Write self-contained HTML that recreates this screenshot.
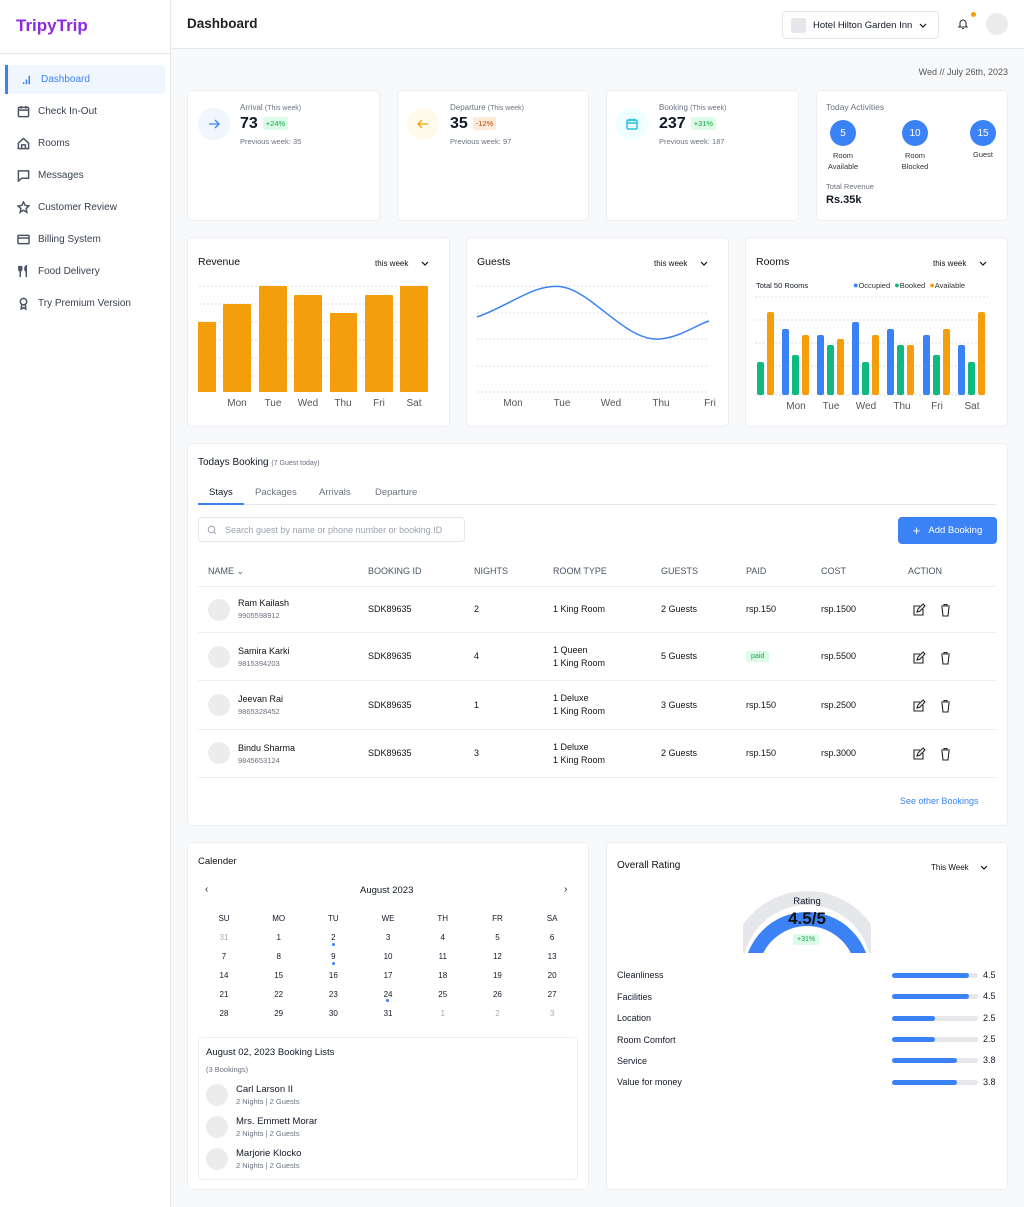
<!DOCTYPE html>
<html><head><meta charset="utf-8">
<style>
*{box-sizing:border-box;margin:0;padding:0}
body{width:1024px;height:1207px;font-family:"Liberation Sans",sans-serif;background:#f8f9fb;color:#111827;position:relative;overflow:hidden;font-size:9px}
.abs{position:absolute}
.side{left:0;top:0;width:171px;height:1207px;background:#fff;border-right:1px solid #e5e7eb}
.logo{left:16px;top:16px;font-size:17px;font-weight:bold;color:#8b2be2}
.nav{left:5px;width:160px;height:29px;display:flex;align-items:center;padding-left:12px;font-size:10px;color:#374151}
.nav svg{width:13px;height:13px;margin-right:8px;fill:none;stroke:#4b5563;stroke-width:1.6}
.card{background:#fff;border:1px solid #eceef2;border-radius:5px}
.muted{color:#6b7280}
.t{font-size:10.5px;color:#111}
.dd{font-size:8px;color:#111}
.badge{display:inline-block;font-size:7.5px;padding:2px 3px;border-radius:2px;vertical-align:middle;margin-left:5px}
.ic{width:32px;height:32px;border-radius:50%;display:flex;align-items:center;justify-content:center}
.circ{width:26px;height:26px;border-radius:50%;background:#3b82f6;color:#fff;font-size:10px;display:flex;align-items:center;justify-content:center}
.th{font-size:9px;color:#4b5563;top:566px}
.row{font-size:9px;color:#111}
.av{width:22px;height:22px;border-radius:50%;background:#ececec}
.cal div{font-size:8px;text-align:center;width:30px}
.bar{height:5px;background:#e5e7eb;border-radius:3px;width:86px;left:892px}
.bar i{display:block;height:5px;background:#3b82f6;border-radius:3px}
.rv{left:983px;font-size:9px}
</style></head><body>
<div class="abs side"></div>
<div class="abs logo">TripyTrip</div>
<div class="abs" style="left:0;top:53px;width:171px;border-top:1px solid #e5e7eb"></div>
<div class="abs nav" style="top:65px;background:#eff6ff;border-left:3px solid #3b82f6;border-radius:0 4px 4px 0;color:#3b82f6"><svg viewBox="0 0 14 14" style="stroke:#3b82f6"><path d="M4 12V10M7 12V7M10 12V3"/></svg>Dashboard</div>
<div class="abs nav" style="top:97px"><svg viewBox="0 0 14 14"><rect x="1.5" y="2.5" width="11" height="10" rx="1"/><path d="M1.5 5.5h11M4.5 1v3M9.5 1v3"/></svg>Check In-Out</div>
<div class="abs nav" style="top:129px"><svg viewBox="0 0 14 14"><path d="M1.5 6.5L7 1.5l5.5 5v6h-11z"/><path d="M5 12.5v-4h4v4"/></svg>Rooms</div>
<div class="abs nav" style="top:161px"><svg viewBox="0 0 14 14"><path d="M1.5 2h11v8H5l-3.5 3z"/></svg>Messages</div>
<div class="abs nav" style="top:193px"><svg viewBox="0 0 14 14"><path d="M7 1l1.8 3.8 4 .5-3 2.8.8 4L7 10l-3.6 2.1.8-4-3-2.8 4-.5z"/></svg>Customer Review</div>
<div class="abs nav" style="top:225px"><svg viewBox="0 0 14 14"><rect x="1" y="2.5" width="12" height="9" rx="1"/><path d="M1 5.5h12"/></svg>Billing System</div>
<div class="abs nav" style="top:257px"><svg viewBox="0 0 14 14"><path d="M2 1v4a1.5 1.5 0 003 0V1M3.5 1v12M10 13V1c-2 1-2 5 0 6"/></svg>Food Delivery</div>
<div class="abs nav" style="top:289px"><svg viewBox="0 0 14 14"><circle cx="7" cy="5" r="3.5"/><path d="M5 8.5L4.5 13 7 11.5 9.5 13 9 8.5"/></svg>Try Premium Version</div>

<div class="abs" style="left:172px;top:0;width:852px;height:49px;background:#fff;border-bottom:1px solid #e5e7eb"></div>
<div class="abs" style="left:187px;top:16px;font-size:13.5px;font-weight:bold;color:#222">Dashboard</div>
<div class="abs" style="left:782px;top:11px;width:157px;height:28px;border:1px solid #e5e7eb;border-radius:4px;background:#fff;display:flex;align-items:center;padding-left:8px;font-size:9.5px"><span style="width:15px;height:15px;background:#e5e7eb;border-radius:2px;margin-right:7px"></span>Hotel Hilton Garden Inn<svg width="10" height="10" viewBox="0 0 10 10" style="margin-left:6px"><path d="M2 4l3 3 3-3" stroke="#111" fill="none" stroke-width="1.2"/></svg></div>
<svg class="abs" style="left:957px;top:17px" width="12" height="13" viewBox="0 0 12 13"><path d="M3 9V6a3 3 0 016 0v3l1 1H2zM5 11.5h2" stroke="#333" fill="none" stroke-width="1.1"/></svg>
<div class="abs" style="left:971px;top:12px;width:5px;height:5px;border-radius:50%;background:#f59e0b"></div>
<div class="abs" style="left:986px;top:13px;width:22px;height:22px;border-radius:50%;background:#ececec"></div>
<div class="abs muted" style="left:880px;top:67px;width:128px;text-align:right;font-size:9px;color:#555">Wed // July 26th, 2023</div>

<!-- stat cards -->
<div class="abs card" style="left:187px;top:90px;width:193px;height:131px"></div>
<div class="abs ic" style="left:198px;top:108px;background:#eff6ff"><svg width="14" height="14" viewBox="0 0 14 14"><path d="M2 7h10M8 3l4 4-4 4" stroke="#3b82f6" fill="none" stroke-width="1.3"/></svg></div>
<div class="abs muted" style="left:240px;top:103px;font-size:8px">Arrival <span style="font-size:7px">(This week)</span></div>
<div class="abs" style="left:240px;top:115px;font-size:16px;font-weight:bold">73<span class="badge" style="background:#dcfce7;color:#16a34a;font-weight:normal">+24%</span></div>
<div class="abs muted" style="left:240px;top:137px;font-size:7.5px">Previous week: 35</div>

<div class="abs card" style="left:397px;top:90px;width:192px;height:131px"></div>
<div class="abs ic" style="left:407px;top:108px;background:#fffbeb"><svg width="14" height="14" viewBox="0 0 14 14"><path d="M12 7H2M6 3L2 7l4 4" stroke="#f59e0b" fill="none" stroke-width="1.3"/></svg></div>
<div class="abs muted" style="left:450px;top:103px;font-size:8px">Departure <span style="font-size:7px">(This week)</span></div>
<div class="abs" style="left:450px;top:115px;font-size:16px;font-weight:bold">35<span class="badge" style="background:#fdebd8;color:#c2410c;font-weight:normal">-12%</span></div>
<div class="abs muted" style="left:450px;top:137px;font-size:7.5px">Previous week: 97</div>

<div class="abs card" style="left:606px;top:90px;width:193px;height:131px"></div>
<div class="abs ic" style="left:616px;top:108px;background:#ecfeff"><svg width="14" height="14" viewBox="0 0 14 14"><rect x="2" y="3" width="10" height="9" rx="1" stroke="#06b6d4" fill="none" stroke-width="1.2"/><path d="M2 6h10M5 1.5v3M9 1.5v3" stroke="#06b6d4" stroke-width="1.2"/></svg></div>
<div class="abs muted" style="left:659px;top:103px;font-size:8px">Booking <span style="font-size:7px">(This week)</span></div>
<div class="abs" style="left:659px;top:115px;font-size:16px;font-weight:bold">237<span class="badge" style="background:#dcfce7;color:#16a34a;font-weight:normal">+31%</span></div>
<div class="abs muted" style="left:659px;top:137px;font-size:7.5px">Previous week: 187</div>

<div class="abs card" style="left:816px;top:90px;width:192px;height:131px"></div>
<div class="abs muted" style="left:826px;top:102px;font-size:8.5px">Today Activities</div>
<div class="abs circ" style="left:830px;top:120px">5</div>
<div class="abs circ" style="left:902px;top:120px">10</div>
<div class="abs circ" style="left:970px;top:120px">15</div>
<div class="abs" style="left:815px;top:150px;width:56px;text-align:center;font-size:7.5px;color:#333;line-height:11px">Room<br>Available</div>
<div class="abs" style="left:887px;top:150px;width:56px;text-align:center;font-size:7.5px;color:#333;line-height:11px">Room<br>Blocked</div>
<div class="abs" style="left:955px;top:150px;width:56px;text-align:center;font-size:7.5px;color:#333">Guest</div>
<div class="abs muted" style="left:826px;top:182px;font-size:7.5px">Total Revenue</div>
<div class="abs" style="left:826px;top:194px;font-size:11px;font-weight:bold">Rs.35k</div>

<!-- charts -->
<div class="abs card" style="left:187px;top:237px;width:263px;height:190px"></div>
<div class="abs t" style="left:198px;top:256px">Revenue</div>
<div class="abs dd" style="left:375px;top:259px">this week</div>
<svg class="abs" style="left:420px;top:258px" width="10" height="10" viewBox="0 0 10 10"><path d="M2 4l3 3 3-3" stroke="#111" fill="none" stroke-width="1.2"/></svg>
<svg class="abs" style="left:187px;top:237px" width="263" height="190">
<g stroke="#ddd" stroke-dasharray="2 2"><line x1="12" y1="49" x2="242" y2="49"/><line x1="12" y1="67" x2="242" y2="67"/><line x1="12" y1="85" x2="242" y2="85"/><line x1="12" y1="103" x2="242" y2="103"/><line x1="12" y1="121" x2="242" y2="121"/><line x1="12" y1="139" x2="242" y2="139"/></g>
<g fill="#f59e0b"><rect x="11" y="85" width="18" height="70"/><rect x="36" y="67" width="28" height="88" rx="1"/><rect x="72" y="49" width="28" height="106" rx="1"/><rect x="107" y="58" width="28" height="97" rx="1"/><rect x="143" y="76" width="27" height="79" rx="1"/><rect x="178" y="58" width="28" height="97" rx="1"/><rect x="213" y="49" width="28" height="106" rx="1"/></g>
<g font-size="10" fill="#555" text-anchor="middle" font-family="Liberation Sans"><text x="50" y="169">Mon</text><text x="86" y="169">Tue</text><text x="121" y="169">Wed</text><text x="156" y="169">Thu</text><text x="192" y="169">Fri</text><text x="227" y="169">Sat</text></g>
</svg>

<div class="abs card" style="left:466px;top:237px;width:263px;height:190px"></div>
<div class="abs t" style="left:477px;top:256px">Guests</div>
<div class="abs dd" style="left:654px;top:259px">this week</div>
<svg class="abs" style="left:699px;top:258px" width="10" height="10" viewBox="0 0 10 10"><path d="M2 4l3 3 3-3" stroke="#111" fill="none" stroke-width="1.2"/></svg>
<svg class="abs" style="left:466px;top:237px" width="263" height="190">
<g stroke="#ddd" stroke-dasharray="2 2"><line x1="11" y1="49" x2="243" y2="49"/><line x1="11" y1="76" x2="243" y2="76"/><line x1="11" y1="102" x2="243" y2="102"/><line x1="11" y1="129" x2="243" y2="129"/><line x1="11" y1="155" x2="243" y2="155"/></g>
<path d="M11 80C45 68 70 45 97 50C128 56 160 105 194 102C215 100 230 88 243 84" stroke="#3b82f6" stroke-width="1.5" fill="none"/>
<g font-size="10" fill="#555" text-anchor="middle" font-family="Liberation Sans"><text x="47" y="169">Mon</text><text x="96" y="169">Tue</text><text x="145" y="169">Wed</text><text x="195" y="169">Thu</text><text x="244" y="169">Fri</text></g>
</svg>

<div class="abs card" style="left:745px;top:237px;width:263px;height:190px"></div>
<div class="abs t" style="left:756px;top:256px">Rooms</div>
<div class="abs dd" style="left:933px;top:259px">this week</div>
<svg class="abs" style="left:978px;top:258px" width="10" height="10" viewBox="0 0 10 10"><path d="M2 4l3 3 3-3" stroke="#111" fill="none" stroke-width="1.2"/></svg>
<div class="abs" style="left:756px;top:281px;font-size:7.5px">Total 50 Rooms</div>
<div class="abs" style="left:853px;top:280px;font-size:7.5px;color:#333"><span style="color:#3b82f6;font-size:9px">●</span>Occupied &nbsp;<span style="color:#10b981;font-size:9px">●</span>Booked &nbsp;<span style="color:#f59e0b;font-size:9px">●</span>Available</div>
<svg class="abs" style="left:745px;top:237px" width="263" height="190">
<g stroke="#ddd" stroke-dasharray="2 2"><line x1="10" y1="60" x2="243" y2="60"/><line x1="10" y1="83" x2="243" y2="83"/><line x1="10" y1="106" x2="243" y2="106"/><line x1="10" y1="129" x2="243" y2="129"/><line x1="10" y1="158" x2="243" y2="158"/></g>
<g><rect x="12" y="125" width="7" height="33" rx="2" fill="#10b981"/><rect x="22" y="75" width="7" height="83" rx="2" fill="#f59e0b"/>
<rect x="37" y="92" width="7" height="66" rx="2" fill="#3b82f6"/><rect x="47" y="118" width="7" height="40" rx="2" fill="#10b981"/><rect x="57" y="98" width="7" height="60" rx="2" fill="#f59e0b"/>
<rect x="72" y="98" width="7" height="60" rx="2" fill="#3b82f6"/><rect x="82" y="108" width="7" height="50" rx="2" fill="#10b981"/><rect x="92" y="102" width="7" height="56" rx="2" fill="#f59e0b"/>
<rect x="107" y="85" width="7" height="73" rx="2" fill="#3b82f6"/><rect x="117" y="125" width="7" height="33" rx="2" fill="#10b981"/><rect x="127" y="98" width="7" height="60" rx="2" fill="#f59e0b"/>
<rect x="142" y="92" width="7" height="66" rx="2" fill="#3b82f6"/><rect x="152" y="108" width="7" height="50" rx="2" fill="#10b981"/><rect x="162" y="108" width="7" height="50" rx="2" fill="#f59e0b"/>
<rect x="178" y="98" width="7" height="60" rx="2" fill="#3b82f6"/><rect x="188" y="118" width="7" height="40" rx="2" fill="#10b981"/><rect x="198" y="92" width="7" height="66" rx="2" fill="#f59e0b"/>
<rect x="213" y="108" width="7" height="50" rx="2" fill="#3b82f6"/><rect x="223" y="125" width="7" height="33" rx="2" fill="#10b981"/><rect x="233" y="75" width="7" height="83" rx="2" fill="#f59e0b"/></g>
<g font-size="10" fill="#555" text-anchor="middle" font-family="Liberation Sans"><text x="51" y="172">Mon</text><text x="86" y="172">Tue</text><text x="121" y="172">Wed</text><text x="157" y="172">Thu</text><text x="192" y="172">Fri</text><text x="227" y="172">Sat</text></g>
</svg>

<!-- booking -->
<div class="abs card" style="left:187px;top:443px;width:821px;height:383px"></div>
<div class="abs" style="left:198px;top:457px;font-size:10px">Todays Booking <span class="muted" style="font-size:7px">(7 Guest today)</span></div>
<div class="abs" style="left:198px;top:504px;width:798px;border-top:1px solid #e5e7eb"></div>
<div class="abs" style="left:198px;top:503px;width:46px;border-top:2px solid #3b82f6"></div>
<div class="abs" style="left:209px;top:487px;font-size:9.5px">Stays</div>
<div class="abs muted" style="left:255px;top:487px;font-size:9.5px">Packages</div>
<div class="abs muted" style="left:319px;top:487px;font-size:9.5px">Arrivals</div>
<div class="abs muted" style="left:375px;top:487px;font-size:9.5px">Departure</div>
<div class="abs" style="left:198px;top:517px;width:267px;height:25px;border:1px solid #e5e7eb;border-radius:4px;display:flex;align-items:center;padding-left:8px;font-size:9px;color:#9ca3af;overflow:hidden;white-space:nowrap"><svg width="10" height="10" viewBox="0 0 10 10" style="margin-right:8px;flex:none"><circle cx="4.5" cy="4.5" r="3.3" stroke="#9ca3af" fill="none"/><path d="M7 7l2 2" stroke="#9ca3af"/></svg>Search guest by name or phone number or booking ID</div>
<div class="abs" style="left:898px;top:517px;width:99px;height:27px;background:#3b82f6;border-radius:4px;color:#fff;font-size:9.5px;display:flex;align-items:center;justify-content:center"><span style="font-size:13px;margin-right:8px">+</span>Add Booking</div>
<div class="abs th" style="left:208px">NAME ⌄</div>
<div class="abs th" style="left:368px">BOOKING ID</div>
<div class="abs th" style="left:474px">NIGHTS</div>
<div class="abs th" style="left:553px">ROOM TYPE</div>
<div class="abs th" style="left:661px">GUESTS</div>
<div class="abs th" style="left:746px">PAID</div>
<div class="abs th" style="left:821px">COST</div>
<div class="abs th" style="left:908px">ACTION</div>
<div class="abs" style="left:198px;top:586px;width:798px;border-top:1px solid #eceef2"></div>
<div class="abs" style="left:198px;top:632px;width:798px;border-top:1px solid #eceef2"></div>
<div class="abs" style="left:198px;top:680px;width:798px;border-top:1px solid #eceef2"></div>
<div class="abs" style="left:198px;top:729px;width:798px;border-top:1px solid #eceef2"></div>
<div class="abs" style="left:198px;top:777px;width:798px;border-top:1px solid #eceef2"></div>

<!-- rows -->
<div class="abs av" style="left:208px;top:599px"></div>
<div class="abs row" style="left:238px;top:598px">Ram Kailash<div class="muted" style="font-size:7.5px;margin-top:3px">9905598912</div></div>
<div class="abs row" style="left:368px;top:604px">SDK89635</div><div class="abs row" style="left:474px;top:604px">2</div><div class="abs row" style="left:553px;top:604px">1 King Room</div><div class="abs row" style="left:661px;top:604px">2 Guests</div><div class="abs row" style="left:746px;top:604px">rsp.150</div><div class="abs row" style="left:821px;top:604px">rsp.1500</div>

<div class="abs av" style="left:208px;top:646px"></div>
<div class="abs row" style="left:238px;top:646px">Samira Karki<div class="muted" style="font-size:7.5px;margin-top:3px">9815394203</div></div>
<div class="abs row" style="left:368px;top:651px">SDK89635</div><div class="abs row" style="left:474px;top:651px">4</div><div class="abs row" style="left:553px;top:644px;line-height:13px">1 Queen<br>1 King Room</div><div class="abs row" style="left:661px;top:651px">5 Guests</div><div class="abs" style="left:746px;top:651px;background:#dcfce7;color:#16a34a;font-size:7px;padding:2px 5px;border-radius:2px">paid</div><div class="abs row" style="left:821px;top:651px">rsp.5500</div>

<div class="abs av" style="left:208px;top:694px"></div>
<div class="abs row" style="left:238px;top:694px">Jeevan Rai<div class="muted" style="font-size:7.5px;margin-top:3px">9865328452</div></div>
<div class="abs row" style="left:368px;top:700px">SDK89635</div><div class="abs row" style="left:474px;top:700px">1</div><div class="abs row" style="left:553px;top:692px;line-height:13px">1 Deluxe<br>1 King Room</div><div class="abs row" style="left:661px;top:700px">3 Guests</div><div class="abs row" style="left:746px;top:700px">rsp.150</div><div class="abs row" style="left:821px;top:700px">rsp.2500</div>

<div class="abs av" style="left:208px;top:742px"></div>
<div class="abs row" style="left:238px;top:743px">Bindu Sharma<div class="muted" style="font-size:7.5px;margin-top:3px">9845653124</div></div>
<div class="abs row" style="left:368px;top:748px">SDK89635</div><div class="abs row" style="left:474px;top:748px">3</div><div class="abs row" style="left:553px;top:741px;line-height:13px">1 Deluxe<br>1 King Room</div><div class="abs row" style="left:661px;top:748px">2 Guests</div><div class="abs row" style="left:746px;top:748px">rsp.150</div><div class="abs row" style="left:821px;top:748px">rsp.3000</div>

<svg class="abs" style="left:912px;top:603px" width="45" height="170" viewBox="0 0 45 170">
<g id="a" stroke="#222" fill="none" stroke-width="1.1"><path d="M8 3H2v9h9V6M5 9l1-3 5-5 2 2-5 5z"/><path d="M29 3h9M32 3V1.5h3V3M30 4l1 9h5l1-9"/></g>
<use href="#a" y="48"/><use href="#a" y="96"/><use href="#a" y="144"/>
</svg>
<div class="abs" style="left:900px;top:796px;font-size:9px;color:#3b82f6">See other Bookings</div>

<!-- calendar -->
<div class="abs card" style="left:187px;top:842px;width:402px;height:348px"></div>
<div class="abs t" style="left:198px;top:856px;font-size:9.5px">Calender</div>
<div class="abs" style="left:205px;top:884px;font-size:10px">‹</div>
<div class="abs" style="left:564px;top:884px;font-size:10px">›</div>
<div class="abs" style="left:360px;top:885px;font-size:9.5px">August 2023</div>
<div class="abs cal" style="left:209px;top:914px;width:358px">
<div style="display:grid;grid-template-columns:repeat(7,54.7px);row-gap:10px;line-height:9px">
<div>SU</div><div>MO</div><div>TU</div><div>WE</div><div>TH</div><div>FR</div><div>SA</div>
<div style="color:#aaa">31</div><div>1</div><div>2</div><div>3</div><div>4</div><div>5</div><div>6</div>
<div>7</div><div>8</div><div>9</div><div>10</div><div>11</div><div>12</div><div>13</div>
<div>14</div><div>15</div><div>16</div><div>17</div><div>18</div><div>19</div><div>20</div>
<div>21</div><div>22</div><div>23</div><div>24</div><div>25</div><div>26</div><div>27</div>
<div>28</div><div>29</div><div>30</div><div>31</div><div style="color:#aaa">1</div><div style="color:#aaa">2</div><div style="color:#aaa">3</div>
</div></div>
<div class="abs" style="left:332px;top:943px;width:3px;height:3px;border-radius:50%;background:#3b82f6"></div>
<div class="abs" style="left:332px;top:962px;width:3px;height:3px;border-radius:50%;background:#3b82f6"></div>
<div class="abs" style="left:386px;top:999px;width:3px;height:3px;border-radius:50%;background:#3b82f6"></div>
<div class="abs card" style="left:198px;top:1037px;width:380px;height:143px"></div>
<div class="abs" style="left:206px;top:1047px;font-size:9.5px">August 02, 2023 Booking Lists</div>
<div class="abs muted" style="left:206px;top:1065px;font-size:7.5px">(3 Bookings)</div>
<div class="abs av" style="left:206px;top:1084px"></div>
<div class="abs" style="left:236px;top:1084px;font-size:9.5px">Carl Larson II<div class="muted" style="font-size:7.5px;margin-top:2px">2 Nights | 2 Guests</div></div>
<div class="abs av" style="left:206px;top:1116px"></div>
<div class="abs" style="left:236px;top:1116px;font-size:9.5px">Mrs. Emmett Morar<div class="muted" style="font-size:7.5px;margin-top:2px">2 Nights | 2 Guests</div></div>
<div class="abs av" style="left:206px;top:1148px"></div>
<div class="abs" style="left:236px;top:1148px;font-size:9.5px">Marjorie Klocko<div class="muted" style="font-size:7.5px;margin-top:2px">2 Nights | 2 Guests</div></div>

<!-- rating -->
<div class="abs card" style="left:606px;top:842px;width:402px;height:348px"></div>
<div class="abs t" style="left:617px;top:860px;font-size:10px">Overall Rating</div>
<div class="abs dd" style="left:931px;top:863px">This Week</div>
<svg class="abs" style="left:979px;top:862px" width="10" height="10" viewBox="0 0 10 10"><path d="M2 4l3 3 3-3" stroke="#111" fill="none" stroke-width="1.2"/></svg>
<svg class="abs" style="left:743px;top:889px" width="128" height="64">
<circle cx="64" cy="80" r="71" stroke="#e5e7eb" stroke-width="14" fill="none"/>
<circle cx="64" cy="86" r="56" stroke="#3b82f6" stroke-width="14" fill="none"/>
</svg>
<div class="abs" style="left:743px;top:896px;width:128px;text-align:center;font-size:9.5px">Rating</div>
<div class="abs" style="left:743px;top:909px;width:128px;text-align:center;font-size:17px;font-weight:bold;color:#111">4.5/5</div>
<div class="abs" style="left:793px;top:934px;background:#dcfce7;color:#16a34a;font-size:7px;padding:2px 4px;border-radius:2px">+31%</div>
<div class="abs" style="left:617px;top:970px;font-size:9px">Cleanliness</div>
<div class="abs" style="left:617px;top:992px;font-size:9px">Facilities</div>
<div class="abs" style="left:617px;top:1013px;font-size:9px">Location</div>
<div class="abs" style="left:617px;top:1035px;font-size:9px">Room Comfort</div>
<div class="abs" style="left:617px;top:1056px;font-size:9px">Service</div>
<div class="abs" style="left:617px;top:1077px;font-size:9px">Value for money</div>
<div class="abs bar" style="top:973px"><i style="width:77px"></i></div>
<div class="abs bar" style="top:994px"><i style="width:77px"></i></div>
<div class="abs bar" style="top:1016px"><i style="width:43px"></i></div>
<div class="abs bar" style="top:1037px"><i style="width:43px"></i></div>
<div class="abs bar" style="top:1058px"><i style="width:65px"></i></div>
<div class="abs bar" style="top:1080px"><i style="width:65px"></i></div>
<div class="abs rv" style="top:970px">4.5</div>
<div class="abs rv" style="top:991px">4.5</div>
<div class="abs rv" style="top:1013px">2.5</div>
<div class="abs rv" style="top:1034px">2.5</div>
<div class="abs rv" style="top:1055px">3.8</div>
<div class="abs rv" style="top:1077px">3.8</div>
</body></html>
